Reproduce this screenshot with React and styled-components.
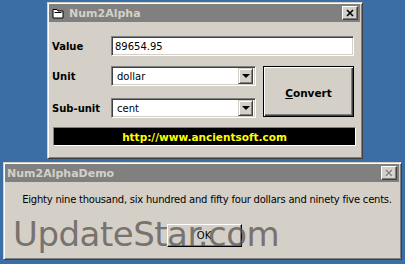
import React from 'react';
import styled, { createGlobalStyle } from 'styled-components';

const Global = createGlobalStyle`
	html, body {
		margin: 0;
		padding: 0;
		width: 405px;
		height: 264px;
		overflow: hidden;
		background: #3a6ea5;
	}
	* {
		box-sizing: border-box;
	}
`;

const Desktop = styled.div`
	width: 405px;
	height: 264px;
	padding-top: 2px;
	font-family: 'DejaVu Sans', Verdana, sans-serif;
	font-size: 10px;
	color: #000;
`;

const Window = styled.div`
	position: relative;
	margin-left: ${(p) => p.$left}px;
	margin-top: ${(p) => p.$top || 0}px;
	width: ${(p) => p.$width}px;
	height: ${(p) => p.$height}px;
	background: #d4d0c8;
	border: 1px solid;
	border-color: #d4d0c8 #404040 #404040 #d4d0c8;
	box-shadow: inset 1px 1px #fff, inset -1px -1px #808080;
	padding: 1px 2px 2px 1px;
	display: flex;
	flex-direction: column;
`;

const TitleBar = styled.div`
	height: 18px;
	flex-shrink: 0;
	background: #808080;
	display: flex;
	align-items: center;
	padding: 0 2px 0 ${(p) => p.$padLeft}px;
	color: #d4d0c8;
	font-weight: bold;
	font-size: ${(p) => p.$size}px;
`;

const TitleText = styled.span`
	flex-grow: 1;
	margin-left: ${(p) => p.$gap || 0}px;
	white-space: nowrap;
`;

const CloseButton = styled.div`
	width: 16px;
	height: 14px;
	background: #d4d0c8;
	border: 1px solid;
	border-color: #fff #404040 #404040 #fff;
	box-shadow: inset -1px -1px #808080;
	display: flex;
	align-items: center;
	justify-content: center;
`;

const Body = styled.div`
	padding: 14px 4px 0 3px;
	display: flex;
	flex-direction: column;
`;

const FieldRow = styled.div`
	display: flex;
	align-items: center;
`;

const Label = styled.div`
	width: 59px;
	font-weight: bold;
	font-size: 10px;
`;

const Sunken = styled.div`
	width: ${(p) => p.$width}px;
	height: ${(p) => p.$height || 20}px;
	background: #fff;
	border: 1px solid;
	border-color: #808080 #fff #fff #808080;
	box-shadow: inset 1px 1px #404040, inset -1px -1px #d4d0c8;
	display: flex;
	align-items: center;
	padding: 0 2px 0 ${(p) => p.$pad}px;
	font-size: 10px;
`;

const SelectText = styled.span`
	flex-grow: 1;
`;

const DropButton = styled.div`
	width: 15px;
	height: 16px;
	background: #d4d0c8;
	border: 1px solid;
	border-color: #d4d0c8 #404040 #404040 #d4d0c8;
	box-shadow: inset 1px 1px #fff, inset -1px -1px #808080;
	display: flex;
	align-items: center;
	justify-content: center;
`;

const Arrow = styled.div`
	width: 0;
	height: 0;
	border-left: 4px solid transparent;
	border-right: 4px solid transparent;
	border-top: 4px solid #000;
`;

const LowerRow = styled.div`
	display: flex;
	margin-top: 10px;
`;

const SelectColumn = styled.div`
	display: flex;
	flex-direction: column;
	gap: 12px;
`;

const ConvertButton = styled.div`
	margin-left: 7px;
	width: 91px;
	height: 51px;
	background: #d4d0c8;
	border: 1px solid #000;
	box-shadow: inset 1px 1px #fff, inset -1px -1px #404040, inset -2px -2px #808080;
	display: flex;
	align-items: center;
	justify-content: center;
	font-weight: bold;
	font-size: 10.5px;
	padding-top: 2px;
`;

const Underline = styled.span`
	text-decoration: underline;
`;

const UrlBar = styled.div`
	margin-top: 9px;
	margin-left: 1px;
	width: 303px;
	height: 19px;
	background: #000;
	border: 1px solid;
	border-color: #808080 #fff #fff #808080;
	color: #ffff00;
	font-weight: bold;
	font-size: 10.5px;
	display: flex;
	align-items: center;
	justify-content: center;
`;

const DialogBody = styled.div`
	position: relative;
	flex-grow: 1;
	display: flex;
	flex-direction: column;
	align-items: center;
	padding-top: 12px;
	overflow: hidden;
`;

const Message = styled.div`
	font-size: 10px;
	white-space: nowrap;
	letter-spacing: -0.23px;
	margin-left: 10px;
`;

const OkButton = styled.div`
	margin-top: 19px;
	margin-left: 4px;
	width: 75px;
	height: 23px;
	border: 1px solid;
	border-color: #fff #000 #000 #fff;
	box-shadow: inset -1px -1px #808080;
	display: flex;
	align-items: center;
	justify-content: center;
	font-size: 10px;
`;

const Watermark = styled.div`
	position: absolute;
	left: 8px;
	top: 35px;
	font-size: 34px;
	line-height: 1;
	color: rgba(95, 89, 85, 0.8);
	letter-spacing: -0.5px;
	pointer-events: none;
	white-space: nowrap;
`;

const AppIcon = () => (
	<svg width="12" height="12" viewBox="0 0 12 12">
		<path d="M1 2.5h4l1 1.5h5v7H1z" fill="#fff" stroke="#000" strokeWidth="1" />
		<path d="M2.5 5.5h7" stroke="#000" strokeWidth="1" />
	</svg>
);

const CloseX = ({ disabled }) => (
	<svg width="9" height="8" viewBox="0 0 9 8">
		{disabled && <path d="M1.5 1.5l6 6M7.5 1.5l-6 6" stroke="#fff" strokeWidth="1.6" />}
		<path d="M1 1l6 6M7 1L1 7" stroke={disabled ? '#808080' : '#000'} strokeWidth="1.6" />
	</svg>
);

const Select = ({ value }) => (
	<Sunken $width={145} $pad={5}>
		<SelectText>{value}</SelectText>
		<DropButton>
			<Arrow />
		</DropButton>
	</Sunken>
);

export default function App() {
	return (
		<Desktop>
			<Global />
			<Window $left={47} $width={316} $height={157}>
				<TitleBar $padLeft={3} $size={11}>
					<AppIcon />
					<TitleText $gap={5}>Num2Alpha</TitleText>
					<CloseButton>
						<CloseX />
					</CloseButton>
				</TitleBar>
				<Body>
					<FieldRow>
						<Label>Value</Label>
						<Sunken $width={243} $pad={3}>89654.95</Sunken>
					</FieldRow>
					<LowerRow>
						<SelectColumn>
							<FieldRow>
								<Label>Unit</Label>
								<Select value="dollar" />
							</FieldRow>
							<FieldRow>
								<Label>Sub-unit</Label>
								<Select value="cent" />
							</FieldRow>
						</SelectColumn>
						<ConvertButton>
							<span>
								<Underline>C</Underline>onvert
							</span>
						</ConvertButton>
					</LowerRow>
					<UrlBar>http://www.ancientsoft.com</UrlBar>
				</Body>
			</Window>
			<Window $left={3} $top={3} $width={399} $height={98}>
				<TitleBar $padLeft={2} $size={11}>
					<TitleText>Num2AlphaDemo</TitleText>
					<CloseButton>
						<CloseX disabled />
					</CloseButton>
				</TitleBar>
				<DialogBody>
					<Message>Eighty nine thousand, six hundred and fifty four dollars and ninety five cents.</Message>
					<OkButton>OK</OkButton>
					<Watermark>UpdateStar.com</Watermark>
				</DialogBody>
			</Window>
		</Desktop>
	);
}
